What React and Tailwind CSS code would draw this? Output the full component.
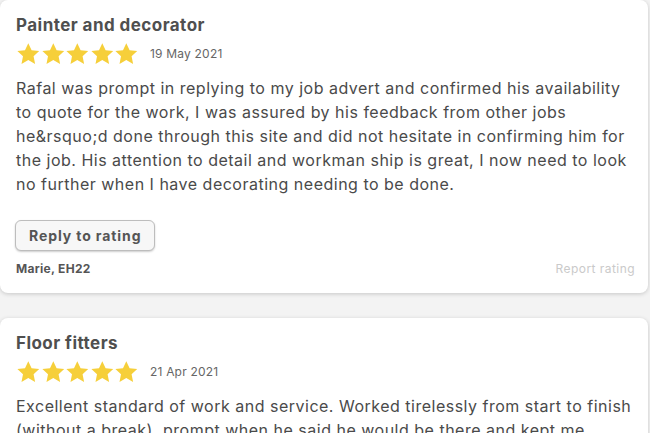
function Star() {
  return (
    <svg viewBox="0 0 24 24" className="w-[24.6px] h-[24px]" aria-hidden="true">
      <path
        d="M12 1.2l3.3 7 7.6.9-5.6 5.2 1.5 7.6L12 18.1l-6.8 3.8 1.5-7.6L1.1 9.1l7.6-.9z"
        fill="#f6cf3a"
      />
    </svg>
  );
}

function Review({ title, date, text, author, last }) {
  return (
    <div className="w-[648px] bg-white rounded-lg shadow-[0_1px_4px_rgba(0,0,0,0.18)] px-4 pt-3 pb-[15px]">
      <h2 className="text-[17px] leading-[26px] font-bold tracking-[0.45px] text-[#4f4f4f]">{title}</h2>
      <div className="flex items-center mt-[4px] h-[24px]">
        <div className="flex">
          <Star />
          <Star />
          <Star />
          <Star />
          <Star />
        </div>
        <span className="ml-[11px] text-[12px] text-[#666] tracking-[0.2px]">{date}</span>
      </div>
      <p className="mt-[10px] text-[16px] leading-[24px] tracking-[0.5px] text-[#4a4a4a]">{text}</p>
      {!last && (
        <>
          <button className="mt-[24px] -ml-px h-[31px] px-[13px] rounded-md border border-[#bdbdbd] bg-[#f7f7f7] shadow-[0_1px_2px_rgba(0,0,0,0.2)] text-[14px] font-bold tracking-[0.9px] text-[#555]">
            Reply to rating
          </button>
          <div className="flex justify-between items-center mt-[9px]">
            <span className="text-[12px] font-bold tracking-[0.3px] text-[#555]">{author}</span>
            <span className="text-[12px] tracking-[0.45px] text-[#cacaca] mr-[-3px]">Report rating</span>
          </div>
        </>
      )}
    </div>
  );
}

export default function App() {
  return (
    <div className="w-[650px] h-[433px] overflow-hidden bg-[#f3f3f3] font-['Inter',sans-serif]">
      <div className="flex flex-col gap-[25px]">
        <Review
          title="Painter and decorator"
          date="19 May 2021"
          text={"Rafal was prompt in replying to my job advert and confirmed his availability to quote for the work, I was assured by his feedback from other jobs he&rsquo;d done through this site and did not hesitate in confirming him for the job. His attention to detail and workman ship is great, I now need to look no further when I have decorating needing to be done."}
          author="Marie, EH22"
        />
        <Review
          title="Floor fitters"
          date="21 Apr 2021"
          text="Excellent standard of work and service. Worked tirelessly from start to finish (without a break), prompt when he said he would be there and kept me informed throughout the whole job."
          last
        />
      </div>
    </div>
  );
}
